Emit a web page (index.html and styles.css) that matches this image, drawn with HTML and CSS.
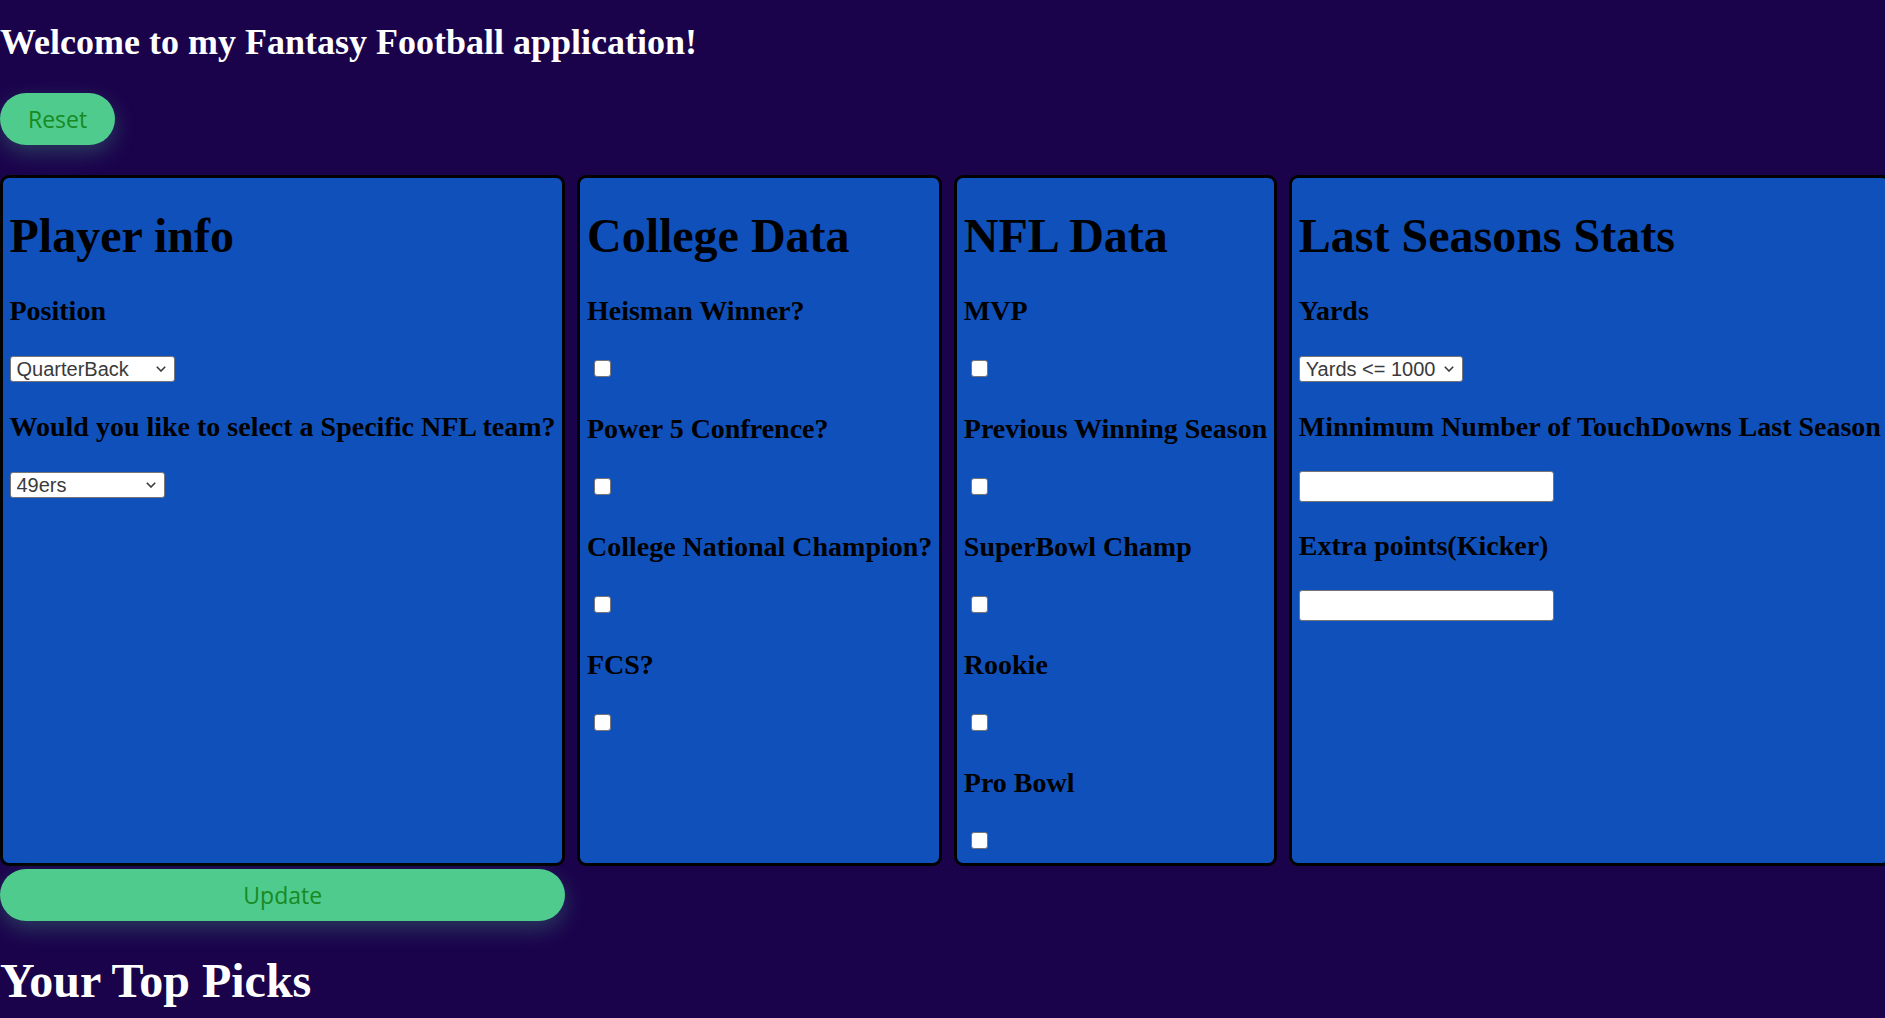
FILE: index.html
```html
<!DOCTYPE html>
<html lang="en">
<head>
<meta charset="utf-8">
<title>Fantasy Football</title>
<link rel="stylesheet" href="styles.css">
</head>
<body>
  <h2 class="welcome">Welcome to my Fantasy Football application!</h2>
  <button class="pill reset">Reset</button>

  <div class="board">
    <section class="panel">
      <h1>Player info</h1>
      <h3>Position</h3>
      <div class="field">
        <span class="select-wrap">
          <select class="sel-position">
            <option>QuarterBack</option>
            <option>RunningBack</option>
            <option>Wide Receiver</option>
            <option>Tight End</option>
            <option>Kicker</option>
          </select>
          <svg class="chevron" viewBox="0 0 10 6" aria-hidden="true"><path d="M0.8 0.8 L5 5 L9.2 0.8"/></svg>
        </span>
      </div>
      <h3>Would you like to select a Specific NFL team?</h3>
      <div class="field">
        <span class="select-wrap">
          <select class="sel-team">
            <option>49ers</option>
            <option>Bears</option>
            <option>Bengals</option>
          </select>
          <svg class="chevron" viewBox="0 0 10 6" aria-hidden="true"><path d="M0.8 0.8 L5 5 L9.2 0.8"/></svg>
        </span>
      </div>
    </section>

    <section class="panel">
      <h1>College Data</h1>
      <h3>Heisman Winner?</h3>
      <div class="check"><input type="checkbox"></div>
      <h3>Power 5 Confrence?</h3>
      <div class="check"><input type="checkbox"></div>
      <h3>College National Champion?</h3>
      <div class="check"><input type="checkbox"></div>
      <h3>FCS?</h3>
      <div class="check"><input type="checkbox"></div>
    </section>

    <section class="panel">
      <h1>NFL Data</h1>
      <h3>MVP</h3>
      <div class="check"><input type="checkbox"></div>
      <h3>Previous Winning Season</h3>
      <div class="check"><input type="checkbox"></div>
      <h3>SuperBowl Champ</h3>
      <div class="check"><input type="checkbox"></div>
      <h3>Rookie</h3>
      <div class="check"><input type="checkbox"></div>
      <h3>Pro Bowl</h3>
      <div class="check"><input type="checkbox"></div>
    </section>

    <section class="panel">
      <h1>Last Seasons Stats</h1>
      <h3>Yards</h3>
      <div class="field">
        <span class="select-wrap">
          <select class="sel-yards">
            <option>Yards &lt;= 1000</option>
            <option>Yards &gt; 1000</option>
          </select>
          <svg class="chevron" viewBox="0 0 10 6" aria-hidden="true"><path d="M0.8 0.8 L5 5 L9.2 0.8"/></svg>
        </span>
      </div>
      <h3>Minnimum Number of TouchDowns Last Season</h3>
      <input type="text" class="text-in">
      <h3>Extra points(Kicker)</h3>
      <input type="text" class="text-in">
    </section>

    <button class="pill update">Update</button>
  </div>

  <h1 class="picks">Your Top Picks</h1>
</body>
</html>
```

FILE: styles.css
```css
html {
  overflow: hidden;
}

body {
  margin: 0;
  background: #1b034c;
  font-family: "Liberation Serif", "Times New Roman", serif;
  font-size: 24px;
  color: #000;
}

.welcome {
  margin: 22px 0 30px;
  font-size: 36px;
  line-height: 41px;
  font-weight: bold;
  color: #fff;
  white-space: nowrap;
}

.pill {
  display: block;
  border: none;
  background: #4fcb8e;
  color: #178a22;
  font-family: "Open Sans", "Noto Sans", sans-serif;
  font-size: 23px;
  height: 52px;
  border-radius: 26px;
  box-shadow: 0 8px 22px rgba(79, 203, 142, 0.28);
  cursor: pointer;
}

.reset {
  padding: 0 28px;
}

.board {
  display: grid;
  grid-template-columns: repeat(4, max-content);
  column-gap: 12px;
  row-gap: 3px;
  margin-top: 30px;
}

.panel {
  background: #1050bb;
  border: 3px solid #000;
  border-radius: 9px;
  padding: 0 7px 6px 6.5px;
}

.panel h1 {
  margin: 30px 0 32px;
  font-size: 48px;
  line-height: 55px;
  white-space: nowrap;
}

.panel h3 {
  margin: 28px 0;
  font-size: 28px;
  line-height: 32px;
  white-space: nowrap;
}

.panel h1 + h3 {
  margin-top: 32px;
}

.field {
  box-sizing: border-box;
  height: 28px;
  padding-top: 1px;
}

.select-wrap {
  position: relative;
  display: inline-block;
  vertical-align: top;
}

.select-wrap select {
  box-sizing: border-box;
  display: block;
  height: 26px;
  margin: 0;
  -webkit-appearance: none;
  appearance: none;
  font-family: "Liberation Sans", Arial, sans-serif;
  font-size: 20px;
  line-height: 24px;
  color: #3a3a3a;
  background: #fff;
  border: 1px solid #767676;
  border-radius: 3px;
  padding: 0 0 0 6px;
}

.chevron {
  position: absolute;
  right: 9px;
  top: 10px;
  width: 10px;
  height: 6px;
  fill: none;
  stroke: #3a3a3a;
  stroke-width: 1.6;
  pointer-events: none;
}

.sel-position {
  width: 165px;
}

.sel-team {
  width: 155px;
}

.sel-yards {
  width: 164px;
}

.check {
  box-sizing: border-box;
  height: 30px;
  padding-top: 5px;
}

.check input {
  -webkit-appearance: none;
  appearance: none;
  display: block;
  box-sizing: border-box;
  width: 17px;
  height: 17px;
  margin: 0 0 0 7px;
  background: #fff;
  border: 1.5px solid #767676;
  border-radius: 3px;
}

.text-in {
  box-sizing: border-box;
  display: block;
  width: 255px;
  height: 31px;
  margin: 0;
  background: #fff;
  border: 1.5px solid #767676;
  border-radius: 3px;
}

.update {
  grid-column: 1;
  width: 100%;
}

.picks {
  margin: 32px 0 0;
  font-size: 48px;
  line-height: 55px;
  color: #fff;
}
```
